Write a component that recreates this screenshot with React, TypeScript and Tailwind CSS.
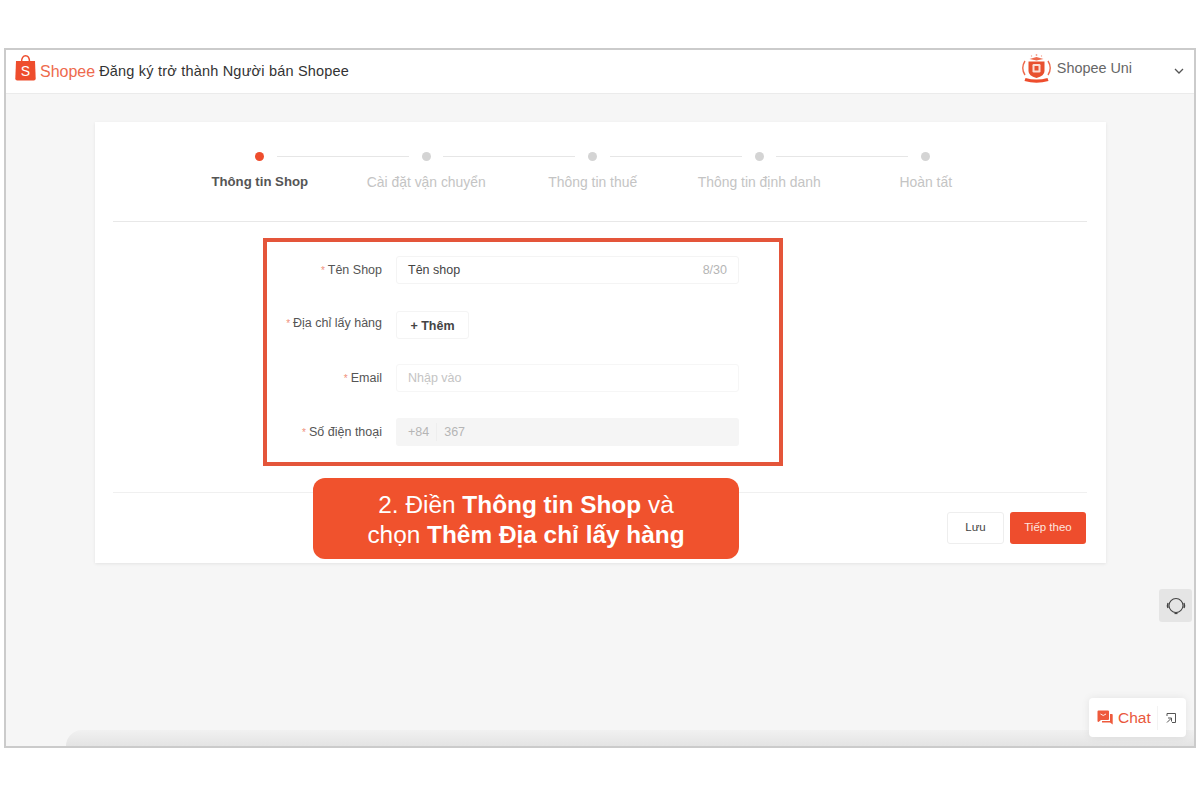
const font = { fontFamily: '"Liberation Sans", Arial, sans-serif' };

function ShopeeBag() {
  return (
    <svg width="21" height="26" viewBox="0 0 21 26" className="shrink-0 mt-[-7px]">
      <path d="M6.5 7 C6.5 2.8 8.3 0.8 10.5 0.8 C12.7 0.8 14.5 2.8 14.5 7" fill="none" stroke="#ee4d2d" strokeWidth="1.5" />
      <path d="M1 6 H20 L20.7 23.5 Q20.7 25.5 18.8 25.5 H2.2 Q0.3 25.5 0.3 23.5 Z" fill="#ee4d2d" />
      <text x="10.5" y="21" textAnchor="middle" fontSize="14" fill="#ffffff" fontFamily="Liberation Sans">S</text>
    </svg>
  );
}

function UniLogo() {
  return (
    <svg width="33" height="30" viewBox="0 0 32 30" className="shrink-0">
      <path d="M4.5 7 Q0 14 4.5 21" fill="none" stroke="#ee6a4d" strokeWidth="1.4" />
      <path d="M27.5 7 Q32 14 27.5 21" fill="none" stroke="#ee6a4d" strokeWidth="1.4" />
      <path d="M9 5 L16 3 L23 5 L16 6.5 Z" fill="#ee6a4d" />
      <circle cx="16" cy="1" r="0.9" fill="#f4a392" />
      <circle cx="11" cy="2" r="0.7" fill="#f4a392" />
      <circle cx="21" cy="2" r="0.7" fill="#f4a392" />
      <path d="M8 7.5 H24 V17 Q24 22 16 24 Q8 22 8 17 Z" fill="#e8502f" />
      <rect x="12" y="10" width="8" height="8.5" rx="1.2" fill="#fbdcd4" />
      <rect x="14" y="12" width="4" height="4.5" rx="0.6" fill="#e8502f" />
      <path d="M5 24 Q16 27 27 24 L28 27 Q16 30.5 4 27 Z" fill="#ee4d2d" />
    </svg>
  );
}

function Step({ label, active }: { label: string; active?: boolean }) {
  return (
    <div className="w-[166.5px] flex flex-col items-center relative shrink-0">
      <div className={active ? "w-[9px] h-[9px] rounded-full bg-[#ee4d2d]" : "w-[9px] h-[9px] rounded-full bg-[#d4d4d4]"} />
      <div className={active ? "mt-[11px] text-[13.2px] leading-[20px] font-bold text-[#555555] whitespace-nowrap" : "mt-[11px] text-[13.9px] leading-[20px] text-[#c4c4c4] whitespace-nowrap"}>
        {label}
      </div>
    </div>
  );
}

function Line() {
  return <div className="absolute top-[4px] left-[100px] w-[132px] h-px bg-[#e6e6e6]" />;
}

function Label({ text, up }: { text: string; up?: boolean }) {
  return (
    <div className={up ? "w-[283px] pr-[14px] mt-[-4px] shrink-0 text-right text-[12.5px] text-[#555555] whitespace-nowrap" : "w-[283px] pr-[14px] shrink-0 text-right text-[12.5px] text-[#555555] whitespace-nowrap"}>
      <span className="text-[#f0917c] text-[10px] mr-[3px]">*</span>
      {text}
    </div>
  );
}

export default function App() {
  const steps = ["Thông tin Shop", "Cài đặt vận chuyển", "Thông tin thuế", "Thông tin định danh", "Hoàn tất"];
  return (
    <div className="w-[1200px] h-[800px] bg-white overflow-hidden pt-[48px] px-[4px]" style={font}>
      <div className="relative w-[1192px] h-[700px] border-2 border-[#cbcbcb] bg-[#f6f6f6] overflow-hidden flex flex-col">
        <header className="h-[44px] shrink-0 bg-white border-b border-[#ebebeb] flex items-center pl-[9px] pr-[10px]">
          <ShopeeBag />
          <span className="ml-[4px] text-[16px] text-[#ee6a4d]">Shopee</span>
          <span className="ml-[4px] text-[14.5px] tracking-[0.2px] text-[#333333]">Đăng ký trở thành Người bán Shopee</span>
          <div className="ml-auto flex items-center mt-[-6px]">
            <UniLogo />
            <span className="ml-[4px] text-[14.4px] text-[#666666]">Shopee Uni</span>
            <svg width="10" height="6" viewBox="0 0 10 6" className="ml-[42px] mt-[5px]">
              <path d="M1 1 L5 5 L9 1" fill="none" stroke="#555555" strokeWidth="1.3" />
            </svg>
          </div>
        </header>

        <main className="flex-1 relative pt-[28px] pl-[89px]">
          <section className="w-[1011px] h-[441px] bg-white shadow-[0_1px_3px_rgba(0,0,0,0.08)] flex flex-col pl-[18px] pr-[19px]">
            <div className="h-[100px] border-b border-[#e8e8e8] shrink-0 pt-[30px] pl-[63.5px] flex">
              {steps.map((s, i) => (
                <div key={s} className="relative">
                  <Step label={s} active={i === 0} />
                  {i < 4 && <Line />}
                </div>
              ))}
            </div>
            <div className="flex-1 flex flex-col pt-[34px]">
              <div className="flex items-center h-[28px]">
                <Label text="Tên Shop" />
                <div className="w-[343px] h-[28px] border border-[#f4f4f4] rounded-[3px] flex items-center justify-between px-[11px] text-[12.5px] text-[#444444]">
                  <span>Tên shop</span>
                  <span className="text-[#b5b5b5]">8/30</span>
                </div>
              </div>
              <div className="flex items-center h-[28px] mt-[27px]">
                <Label text="Địa chỉ lấy hàng" up />
                <div className="w-[73px] h-[28px] border border-[#f4f4f4] rounded-[3px] flex items-center justify-center pt-[2px] text-[12.5px] font-bold text-[#444444]">
                  + Thêm
                </div>
              </div>
              <div className="flex items-center h-[28px] mt-[25px]">
                <Label text="Email" />
                <div className="w-[343px] h-[28px] border border-[#f6f6f6] rounded-[3px] flex items-center px-[11px] text-[12.5px] text-[#c4c4c4]">
                  Nhập vào
                </div>
              </div>
              <div className="flex items-center h-[28px] mt-[26px]">
                <Label text="Số điện thoại" />
                <div className="w-[343px] h-[28px] bg-[#f5f5f5] rounded-[3px] flex items-center px-[12px] text-[12.5px] text-[#b5b5b5]">
                  <span className="pr-[7px] border-r border-[#eeeeee]">+84</span>
                  <span className="ml-[7px]">367</span>
                </div>
              </div>
            </div>
            <div className="h-[71px] shrink-0 border-t border-[#f0f0f0] flex justify-end items-start pt-[19px] pr-[1px] gap-[6px]">
              <div className="w-[57px] h-[32px] border border-[#eeeeee] rounded-[3px] flex items-center justify-center text-[11.5px] text-[#444444]">Lưu</div>
              <div className="w-[76px] h-[32px] bg-[#ee4d2d] rounded-[3px] flex items-center justify-center text-[11.5px] text-[#fde5df]">Tiếp theo</div>
            </div>
          </section>

          <div className="absolute left-[1153px] top-[495px] w-[33px] h-[33px] rounded-[3px] bg-[#e5e5e5] flex items-center justify-center">
            <svg width="20" height="20" viewBox="0 0 20 20">
              <circle cx="10" cy="9.5" r="7" fill="none" stroke="#444444" strokeWidth="1.1" />
              <path d="M2 7 Q1 9.5 2 12 M18 7 Q19 9.5 18 12" fill="none" stroke="#444444" strokeWidth="1.4" />
              <rect x="8.5" y="16.5" width="3" height="1.6" fill="#444444" />
            </svg>
          </div>
        </main>

        <div className="absolute left-[60px] right-0 bottom-0 h-[16px] bg-gradient-to-b from-[#f1f1f1] to-[#e4e4e4] rounded-tl-[34px]" />

        <div className="absolute left-[1083px] top-[648px] w-[97px] h-[39px] bg-white rounded-[4px] shadow-[0_0_8px_rgba(0,0,0,0.08)] flex items-center pl-[8px]">
          <svg width="16" height="15" viewBox="0 0 16 15" className="shrink-0">
            <path d="M1.5 0.5 H11 Q12 0.5 12 1.5 V9 Q12 10 11 10 H4 L1.5 12 Q0.5 12 0.5 11 V1.5 Q0.5 0.5 1.5 0.5 Z" fill="#ee5a3c" />
            <path d="M13 4 H15 Q15.7 4 15.7 5 V14.5 L13 12.5 H5 V11 H13 Z" fill="#ee5a3c" />
            <path d="M3.5 4 Q6.2 7 9 4" fill="none" stroke="#ffffff" strokeWidth="0.9" />
          </svg>
          <span className="ml-[5px] text-[15.5px] text-[#e9583c]">Chat</span>
          <span className="ml-[6px] w-px h-[24px] bg-[#f3f3f3]" />
          <svg width="12" height="12" viewBox="0 0 12 12" className="ml-[7px]">
            <path d="M2 4 V1.5 H10.5 V10.5 H7" fill="none" stroke="#555555" strokeWidth="1" />
            <path d="M2 10.5 L6 6.5 M3 6 H6.5 V9.5" fill="none" stroke="#555555" strokeWidth="1" />
          </svg>
        </div>
      </div>

      <div className="absolute left-[263px] top-[238px] w-[520px] h-[228px] border-[4px] border-[#e4553a]" />
      <div className="absolute left-[313px] top-[478px] w-[426px] h-[81px] pt-[3px] bg-[#f0522d] rounded-[12px] flex flex-col items-center justify-center text-white text-[24.4px] leading-[30px]">
        <div>2. Điền <b>Thông tin Shop</b> và</div>
        <div>chọn <b>Thêm Địa chỉ lấy hàng</b></div>
      </div>
    </div>
  );
}
